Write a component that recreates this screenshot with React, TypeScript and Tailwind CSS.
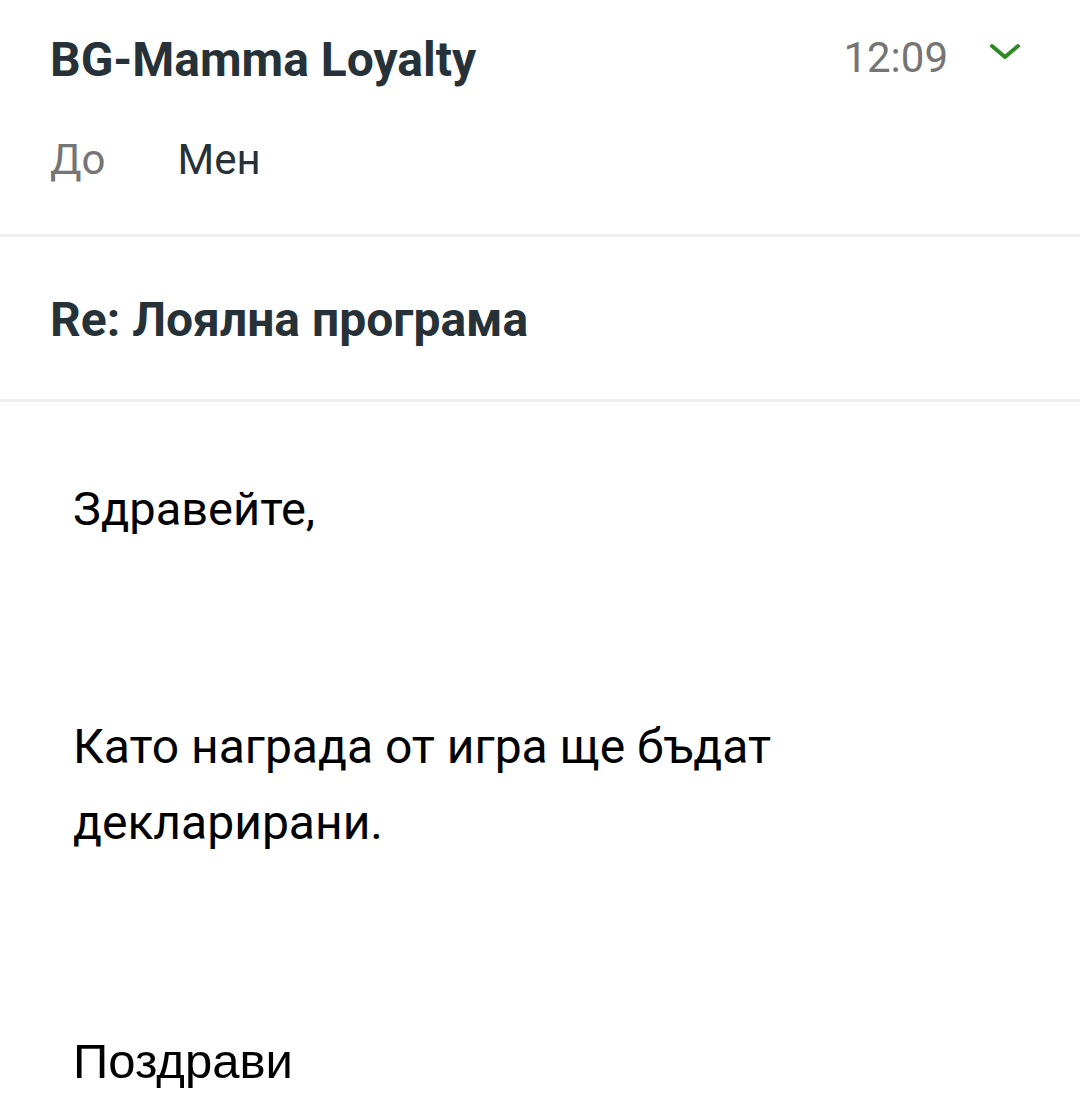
import React from 'react';

function Chevron() {
  return (
    <svg width="34" height="20" viewBox="0 0 34 20" fill="none">
      <path d="M4 4 L17 15 L30 4" stroke="#2e8b22" strokeWidth="4" strokeLinecap="round" strokeLinejoin="round" />
    </svg>
  );
}

export default function App() {
  return (
    <div className="w-[1080px] h-[1113px] bg-white overflow-hidden" style={{ fontFamily: 'Roboto, sans-serif' }}>
      <div className="h-[234px] px-[50px] pt-[30px]">
        <div className="flex items-start justify-between">
          <h1 className="text-[48px] leading-[60px] font-bold text-[#263238]">BG-Mamma Loyalty</h1>
          <div className="flex items-start gap-[40px] pt-[2px] pr-[8px]">
            <span className="text-[42px] leading-[52px] text-[#757575]">12:09</span>
            <div className="pt-[10px]">
              <Chevron />
            </div>
          </div>
        </div>
        <div className="flex gap-[72px] mt-[44px] text-[42px] leading-[52px]">
          <span className="text-[#757575]">До</span>
          <span className="text-[#263238]">Мен</span>
        </div>
      </div>
      <div className="h-[3px] bg-[#eeeeee]" />
      <div className="h-[162px] px-[50px] flex items-center">
        <h2 className="text-[48px] leading-[60px] font-bold text-[#263238] pt-[4px]">Re: Лоялна програма</h2>
      </div>
      <div className="h-[3px] bg-[#eeeeee]" />
      <div className="px-[73px] pt-[69px] text-black text-[47px] leading-[76px]">
        <p>Здравейте,</p>
        <div className="h-[162px]" />
        <p className="text-[48px]">Като награда от игра ще бъдат<br />декларирани.</p>
        <div className="h-[162px]" />
        <p className="text-[49px]" style={{ fontFamily: '"Liberation Sans", sans-serif' }}>Поздрави</p>
      </div>
    </div>
  );
}
